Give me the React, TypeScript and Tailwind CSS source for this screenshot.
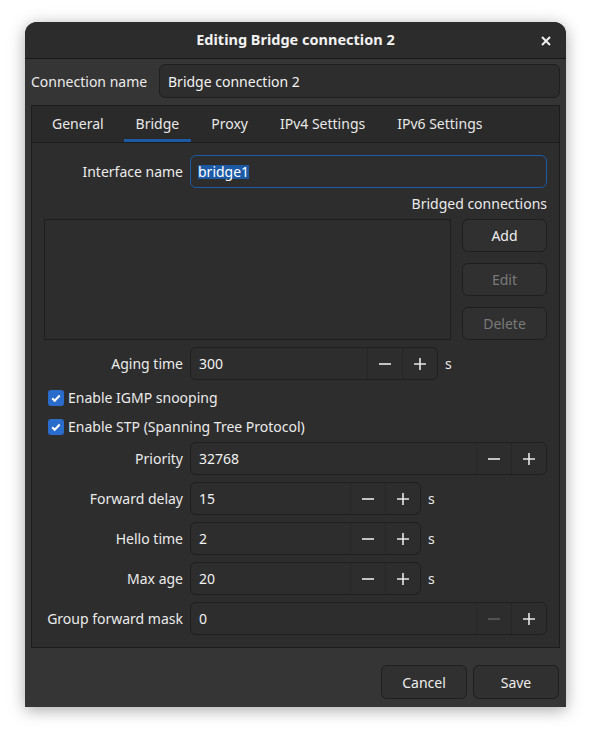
import React from "react";

const font = { fontFamily: '"Noto Sans", "Open Sans", sans-serif' };

function Minus({ dim }: { dim?: boolean }) {
  return (
    <svg width="16" height="16" viewBox="0 0 16 16">
      <path d="M2 8h12" stroke={dim ? "#5c5c5c" : "#e8e8e8"} strokeWidth="1.6" />
    </svg>
  );
}

function Plus() {
  return (
    <svg width="16" height="16" viewBox="0 0 16 16">
      <path d="M2 8h12M8 2v12" stroke="#e8e8e8" strokeWidth="1.6" />
    </svg>
  );
}

function Spin({
  value,
  width,
  minusDim,
}: {
  value: string;
  width: string;
  minusDim?: boolean;
}) {
  return (
    <div
      className={`flex h-[33px] ${width} rounded-[6px] border border-[#1f1f1f] bg-[#2d2d2d]`}
    >
      <div className="flex flex-1 items-center pl-[8px] text-[#f2f2f2]">{value}</div>
      <div className="flex w-[35px] items-center justify-center border-l border-[#262626]">
        <Minus dim={minusDim} />
      </div>
      <div className="flex w-[35px] items-center justify-center border-l border-[#262626]">
        <Plus />
      </div>
    </div>
  );
}

function Row({
  label,
  children,
  className,
}: {
  label: string;
  children: React.ReactNode;
  className?: string;
}) {
  return (
    <div className={`flex items-center ${className ?? ""}`}>
      <div className="w-[139px] shrink-0 text-right text-[#ebebeb]">{label}</div>
      <div className="ml-[7px] flex flex-1 items-center gap-[7px]">{children}</div>
    </div>
  );
}

function Check({ label, className }: { label: string; className?: string }) {
  return (
    <div className={`flex h-[21px] items-center pl-[4px] ${className ?? ""}`}>
      <div className="flex h-[16px] w-[16px] items-center justify-center rounded-[3px] bg-[#2a6ccc]">
        <svg width="12" height="12" viewBox="0 0 12 12">
          <path d="M2.2 6.2l2.5 2.5 5-5.2" fill="none" stroke="#fff" strokeWidth="2" />
        </svg>
      </div>
      <span className="ml-[4px] text-[#ebebeb]">{label}</span>
    </div>
  );
}

function Button({ label, disabled }: { label: string; disabled?: boolean }) {
  return (
    <div
      className={`flex h-[33px] items-center justify-center rounded-[6px] border border-[#1e1e1e] bg-[#303030] ${
        disabled ? "text-[#7a7a7a]" : "text-[#eeeeee]"
      }`}
    >
      {label}
    </div>
  );
}

export default function App() {
  const tabs = ["General", "Bridge", "Proxy", "IPv4 Settings", "IPv6 Settings"];
  return (
    <div className="h-[735px] w-[591px] bg-white pl-[25px] pt-[22px] text-[14px]" style={font}>
      <div className="flex h-[685px] w-[541px] flex-col overflow-hidden rounded-t-[12px] bg-[#353535] shadow-[0_3px_16px_rgba(0,0,0,0.35)]">
        <div className="relative flex h-[37px] shrink-0 items-center justify-center border-b border-[#171717] bg-[#2c2c2c]">
          <span className="text-[14.5px] font-bold text-[#f2f2f2]">Editing Bridge connection 2</span>
          <svg className="absolute right-[15px] top-[14px]" width="10" height="10" viewBox="0 0 10 10">
            <path d="M1 1l8 8M9 1l-8 8" stroke="#f0f0f0" strokeWidth="2" />
          </svg>
        </div>

        <div className="flex flex-1 flex-col px-[6px] pt-[5px]">
          <div className="flex items-center">
            <span className="w-[128px] text-[#ebebeb]">Connection name</span>
            <div className="flex h-[34px] flex-1 items-center rounded-[6px] border border-[#1f1f1f] bg-[#2d2d2d] pl-[8px] text-[#f2f2f2]">
              Bridge connection 2
            </div>
          </div>

          <div className="mt-[7px] flex h-[543px] flex-col border border-[#1c1c1c] bg-[#2d2d2d]">
            <div className="flex h-[37px] shrink-0 gap-[8px] border-b border-[#1c1c1c] bg-[#2a2a2a] pl-[8px]">
              {tabs.map((t) => (
                <div
                  key={t}
                  className={`flex items-center border-b-[3px] px-[12px] pt-[2px] ${
                    t === "Bridge" ? "border-[#1c5aa6]" : "border-transparent"
                  } text-[#e8e8e8]`}
                >
                  {t}
                </div>
              ))}
            </div>

            <div className="flex flex-col px-[12px] pt-[12px]">
              <Row label="Interface name">
                <div className="flex h-[33px] flex-1 items-center rounded-[6px] border-[1.5px] border-[#1c5aa6] bg-[#2d2d2d] pl-[7px]">
                  <span className="bg-[#1c5aa6] leading-[14px] text-white">bridge1</span>
                </div>
              </Row>

              <div className="mt-[5px] text-right text-[#ebebeb]">Bridged connections</div>

              <div className="mt-[5px] flex gap-[11px]">
                <div className="h-[121px] flex-1 border border-[#1e1e1e] bg-[#2d2d2d]" />
                <div className="flex w-[85px] flex-col gap-[11px]">
                  <Button label="Add" />
                  <Button label="Edit" disabled />
                  <Button label="Delete" disabled />
                </div>
              </div>

              <Row label="Aging time" className="mt-[7px]">
                <Spin value="300" width="w-[248px]" />
                <span className="text-[#ebebeb]">s</span>
              </Row>

              <Check label="Enable IGMP snooping" className="mt-[7px]" />
              <Check label="Enable STP (Spanning Tree Protocol)" className="mt-[8px]" />

              <Row label="Priority" className="mt-[5px]">
                <Spin value="32768" width="flex-1" />
              </Row>
              <Row label="Forward delay" className="mt-[7px]">
                <Spin value="15" width="w-[231px]" />
                <span className="text-[#ebebeb]">s</span>
              </Row>
              <Row label="Hello time" className="mt-[7px]">
                <Spin value="2" width="w-[231px]" />
                <span className="text-[#ebebeb]">s</span>
              </Row>
              <Row label="Max age" className="mt-[7px]">
                <Spin value="20" width="w-[231px]" />
                <span className="text-[#ebebeb]">s</span>
              </Row>
              <Row label="Group forward mask" className="mt-[7px]">
                <Spin value="0" width="flex-1" minusDim />
              </Row>
            </div>
          </div>

          <div className="mt-[17px] flex justify-end gap-[6px] pr-[1px]">
            <div className="flex h-[34px] w-[86px] items-center justify-center rounded-[6px] border border-[#1e1e1e] bg-[#303030] text-[#eeeeee]">
              Cancel
            </div>
            <div className="flex h-[34px] w-[86px] items-center justify-center rounded-[6px] border border-[#1e1e1e] bg-[#303030] text-[#eeeeee]">
              Save
            </div>
          </div>
        </div>
      </div>
    </div>
  );
}
